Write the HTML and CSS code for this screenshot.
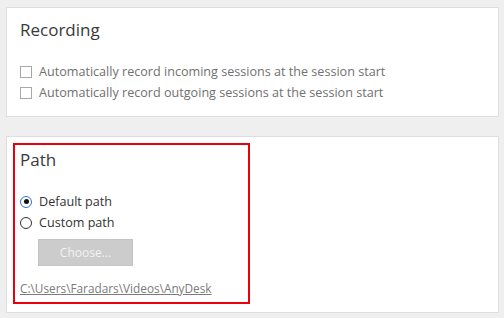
FILE: index.html
```html
<!DOCTYPE html>
<html>
<head>
<meta charset="utf-8">
<link rel="stylesheet" href="styles.css">
</head>
<body>
<div class="page">
  <section class="card rec">
    <h2 class="title">Recording</h2>
    <label class="check"><span class="box"></span><span>Automatically record incoming sessions at the session start</span></label>
    <label class="check"><span class="box"></span><span>Automatically record outgoing sessions at the session start</span></label>
  </section>
  <section class="card path">
    <div class="hl">
      <h2 class="title">Path</h2>
      <label class="radio"><span class="dot on"></span><span>Default path</span></label>
      <label class="radio"><span class="dot"></span><span>Custom path</span></label>
      <button class="choose">Choose...</button>
      <a class="link">C:\Users\Faradars\Videos\AnyDesk</a>
    </div>
  </section>
</div>
</body>
</html>
```
FILE: styles.css
```css
html, body { margin: 0; padding: 0; }
body {
  background: #efefef;
  font-family: "Open Sans", "Noto Sans", sans-serif;
  width: 504px; height: 318px; overflow: hidden;
}
.page { padding: 7px 5px 0 6px; display: flex; flex-direction: column; gap: 19px; }
.card {
  background: #fff;
  border: 1px solid #dedede;
  box-sizing: border-box;
}
.rec { height: 110px; padding: 12px 0 0 13px; }
.title {
  margin: 0;
  font-weight: 400;
  font-size: 17px;
  color: #3a3a3a;
  line-height: 20px;
}
.rec .title { margin-bottom: 21px; }
.check {
  display: flex; align-items: center; gap: 7px;
  font-size: 12.6px; color: #707070; height: 21px; line-height: 21px;
}
.box {
  width: 10px; height: 10px; border: 1px solid #a8a8a8; background: #fff; flex: none;
}
.path { height: 177px; padding: 6px 0 0 6px; }
.hl {
  width: 237px; height: 161px; box-sizing: border-box;
  border: 2px solid #e8000b;
  padding: 5px 0 0 5px;
  display: flex; flex-direction: column; align-items: flex-start;
}
.path .title { margin-bottom: 21px; }
.radio {
  display: flex; align-items: center; gap: 7px;
  font-size: 12.6px; color: #333; height: 21px; line-height: 21px;
}
.dot {
  width: 10px; height: 10px; border: 1px solid #333; border-radius: 50%;
  position: relative; flex: none;
}
.dot.on { border-color: #3a6fd6; }
.dot.on::after {
  content: ""; position: absolute; left: 2.5px; top: 2.5px;
  width: 5px; height: 5px; border-radius: 50%; background: #111;
}
.choose {
  margin: 6px 0 0 18px;
  width: 95px; height: 27px;
  background: #cccccc; border: 1px solid #c4c4c4;
  color: #f2f2f2; font-family: inherit; font-size: 12px; padding: 0;
}
.link {
  margin-top: 14px;
  font-size: 11.8px; color: #7a7a7a; text-decoration: underline;
  line-height: 16px;
}
```
